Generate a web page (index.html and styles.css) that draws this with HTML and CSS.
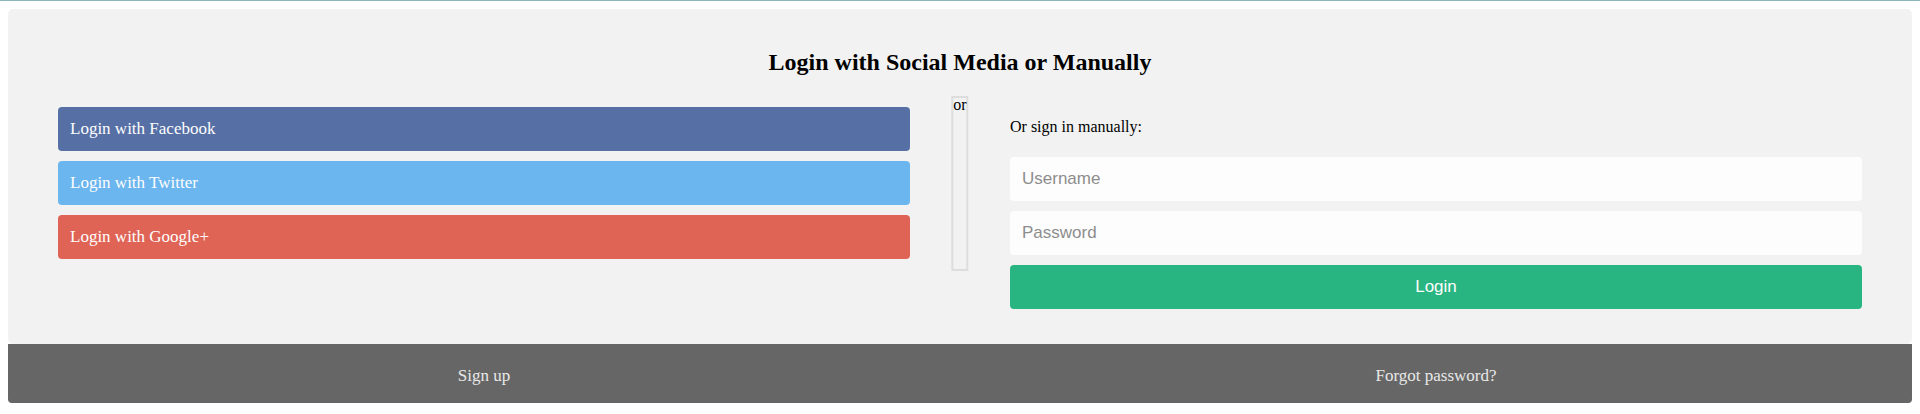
FILE: index.html
```html
<!DOCTYPE html>
<html lang="en">
<head>
<meta charset="utf-8">
<title>Login</title>
<link rel="stylesheet" href="styles.css">
</head>
<body>
<div class="container">
  <form class="form">
    <h2 class="title">Login with Social Media or Manually</h2>
    <div class="row">
      <div class="vl"><span class="vl-text">or</span></div>
      <div class="col">
        <a href="#" class="btn fb">Login with Facebook</a>
        <a href="#" class="btn twitter">Login with Twitter</a>
        <a href="#" class="btn google">Login with Google+</a>
      </div>
      <div class="col">
        <p class="manual">Or sign in manually:</p>
        <input class="field" type="text" name="username" placeholder="Username">
        <input class="field" type="password" name="password" placeholder="Password">
        <input class="submit" type="submit" value="Login">
      </div>
    </div>
  </form>
</div>
<div class="bottom">
  <div class="bottom-col"><a href="#" class="btn link">Sign up</a></div>
  <div class="bottom-col"><a href="#" class="btn link">Forgot password?</a></div>
</div>
</body>
</html>
```
FILE: styles.css
```css
* {
  box-sizing: border-box;
}

html {
  border-top: 1px solid #8bb5b9;
}

body {
  margin: 8px;
  font-family: "Liberation Serif", "Times New Roman", serif;
  font-size: 16px;
  color: #000;
  background: #fff;
}

.container {
  background: #f2f2f2;
  border-radius: 5px;
  padding: 20px 0 30px;
}

.form {
  margin: 0;
}

.title {
  font-size: 24px;
  font-weight: bold;
  text-align: center;
  margin: 0.83em 0;
}

.row {
  position: relative;
  display: flex;
}

.col {
  width: 50%;
  padding: 0 50px;
  margin-top: 6px;
  display: flex;
  flex-direction: column;
}

.vl {
  position: absolute;
  top: 0;
  left: 50%;
  transform: translate(-50%);
  border: 2px solid #dddddd;
  height: 175px;
}

.vl-text {
  display: block;
  line-height: 13px;
  font-size: 16px;
}

.btn {
  display: block;
  width: 100%;
  height: 44px;
  padding: 12px;
  border: none;
  border-radius: 4px;
  margin: 5px 0;
  font-size: 17px;
  line-height: 20px;
  text-decoration: none;
  color: #fdfdfd;
}

.fb {
  background: #5670a5;
}

.twitter {
  background: #6bb6ef;
}

.google {
  background: #e06455;
}

.manual {
  margin: 16px 0;
  line-height: normal;
}

.field,
.submit {
  display: block;
  width: 100%;
  height: 44px;
  padding: 12px;
  border: none;
  border-radius: 4px;
  margin: 5px 0;
  font-family: "Liberation Sans", Arial, sans-serif;
  font-size: 17px;
  line-height: 20px;
  outline: none;
}

.field {
  background: #fdfdfd;
  color: #333;
}

.field::placeholder {
  color: #8d8d8d;
}

.submit {
  background: #28b581;
  color: #fdfdfd;
  text-align: center;
  cursor: pointer;
}

.bottom {
  display: flex;
  background: #666666;
  border-radius: 0 0 4px 4px;
  padding: 10px 0 5px;
}

.bottom-col {
  width: 50%;
  padding: 0 50px;
}

.link {
  margin: 0;
  text-align: center;
  color: #e8e8e8;
}
```
